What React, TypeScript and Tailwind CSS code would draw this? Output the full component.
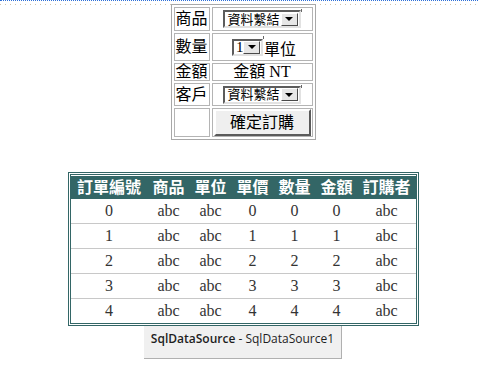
import React from 'react';

const serif = "font-['Liberation_Serif','Noto_Sans_CJK_TC',serif]";

// classic sunken dropdown, the way the designer draws it
const Dropdown = ({ label, w }: { label: string; w: 'wide' | 'narrow' }) => (
  <span
    className={`inline-flex items-center bg-white border-2 border-t-[#5c5c5c] border-l-[#5c5c5c] border-r-[#e2e2e2] border-b-[#e2e2e2] align-middle ${
      w === 'wide' ? 'w-[78px] h-[18px]' : 'w-[31px] h-[17px]'
    }`}
  >
    <span
      className={`flex-1 text-left leading-none text-black ${
        w === 'wide' ? 'pl-[3px] text-[13px]' : 'pl-[2px] text-[15px]'
      }`}
    >
      {label}
    </span>
    <span className="w-[17px] h-[13px] mr-[1px] bg-[#e6e6e6] border border-t-white border-l-white border-r-[#4a4a4a] border-b-[#4a4a4a] flex items-center justify-center">
      <span className="w-0 h-0 border-l-[4px] border-r-[4px] border-t-[4px] border-l-transparent border-r-transparent border-t-black" />
    </span>
  </span>
);

const Tick = () => <span className="inline-block w-[1px] h-[3px] bg-[#666] align-top" />;

const cols = ['訂單編號', '商品', '單位', '單價', '數量', '金額', '訂購者'];

const App: React.FC = () => {
  const rows = [0, 1, 2, 3, 4];

  return (
    <div className={`w-[478px] h-[366px] bg-white overflow-hidden ${serif}`}>
      {/* designer guide lines */}
      <div className="border-t border-dotted border-[#2d6fd8]" />
      <div className="mt-[3px] h-[1px] bg-[linear-gradient(to_right,#cfc3ae_1px,transparent_1px)] bg-[length:5px_1px]" />

      {/* order form */}
      <div className="-mt-[1px] flex justify-center pl-[8px]">
        <table className="border-separate border-spacing-[2px] border border-[#a8a8a8] bg-white text-[16px] text-black">
          <tbody>
            <tr>
              <td className="border border-[#b4b4b4] p-0">
                <div className="w-[34px] h-[22px] flex items-center justify-center">商品</div>
              </td>
              <td className="border border-[#b4b4b4] p-0">
                <div className="w-[99px] h-[22px] flex items-center justify-center">
                  <Dropdown label="資料繫結" w="wide" />
                  <span className="self-start mt-[1px]"><Tick /></span>
                </div>
              </td>
            </tr>
            <tr>
              <td className="border border-[#b4b4b4] p-0">
                <div className="w-[34px] h-[26px] flex items-center justify-center">數量</div>
              </td>
              <td className="border border-[#b4b4b4] p-0">
                <div className="w-[99px] h-[26px] flex items-center justify-center pl-[4px]">
                  <Dropdown label="1" w="narrow" />
                  <span className="self-start mt-[2px]"><Tick /></span>
                  <span className="mt-[5px] leading-none">單位</span>
                </div>
              </td>
            </tr>
            <tr>
              <td className="border border-[#b4b4b4] p-0">
                <div className="w-[34px] h-[16px] flex items-center justify-center leading-none">金額</div>
              </td>
              <td className="border border-[#b4b4b4] p-0">
                <div className="w-[99px] h-[16px] flex items-center justify-center leading-none">金額 NT</div>
              </td>
            </tr>
            <tr>
              <td className="border border-[#b4b4b4] p-0">
                <div className="w-[34px] h-[21px] flex items-center justify-center">客戶</div>
              </td>
              <td className="border border-[#b4b4b4] p-0">
                <div className="w-[99px] h-[21px] flex items-center justify-center">
                  <Dropdown label="資料繫結" w="wide" />
                  <span className="self-start mt-[1px]"><Tick /></span>
                </div>
              </td>
            </tr>
            <tr>
              <td className="border border-[#b4b4b4] p-0">
                <div className="w-[34px] h-[27px]" />
              </td>
              <td className="border border-[#b4b4b4] p-0">
                <div className="w-[99px] h-[27px] flex items-center justify-center">
                  <button className="w-[97px] h-[27px] bg-[#efefef] border-2 border-t-white border-l-white border-r-[#5a5a5a] border-b-[#5a5a5a] text-[16px] leading-none text-black">
                    確定訂購
                  </button>
                </div>
              </td>
            </tr>
          </tbody>
        </table>
      </div>

      {/* orders grid */}
      <div className="mt-[32px] flex justify-center pl-[8px]">
        <div className="border-[3px] border-double border-[#336666] bg-white">
          <div className="grid grid-cols-[77px_42px_42px_42px_42px_42px_58px] mt-[1px]">
            {cols.map((c) => (
              <div
                key={c}
                className="h-[23px] bg-[#336666] text-white font-bold text-[16px] flex items-center justify-center whitespace-nowrap"
              >
                {c}
              </div>
            ))}
          </div>
          {rows.map((r, i) => (
            <div
              key={r}
              className={`grid grid-cols-[77px_42px_42px_42px_42px_42px_58px] text-[16px] text-[#333333] ${
                i < rows.length - 1 ? 'border-b border-[#c8c8c8] h-[25px]' : 'h-[24px]'
              }`}
            >
              <div className="flex items-center justify-center">{r}</div>
              <div className="flex items-center justify-center">abc</div>
              <div className="flex items-center justify-center">abc</div>
              <div className="flex items-center justify-center">{r}</div>
              <div className="flex items-center justify-center">{r}</div>
              <div className="flex items-center justify-center">{r}</div>
              <div className="flex items-center justify-center">abc</div>
            </div>
          ))}
        </div>
      </div>

      {/* data source control */}
      <div className="flex justify-center pl-[8px]">
        <div className="w-[198px] h-[33px] bg-[#f0f0f0] border-r border-b border-[#b0b0b0] pt-[5px] text-center font-['Open_Sans',sans-serif] text-[12px] leading-[16px] text-[#1e1e1e]">
          <span className="font-semibold">SqlDataSource</span> - SqlDataSource1
        </div>
      </div>
    </div>
  );
};

export default App;
